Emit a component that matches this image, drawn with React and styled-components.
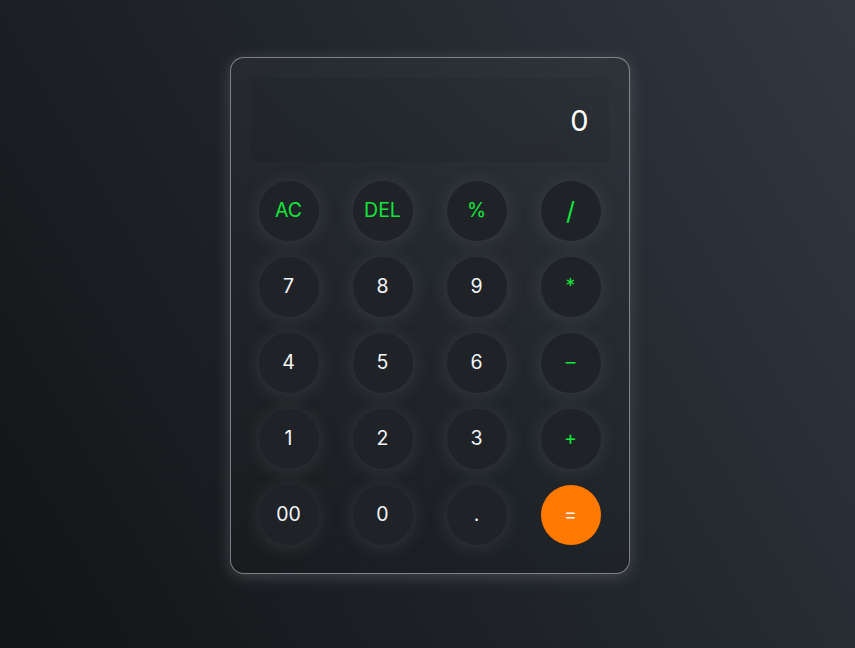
import React from "react";
import styled, { createGlobalStyle } from "styled-components";

const Global = createGlobalStyle`
  html, body { margin: 0; padding: 0; height: 100%; }
  body {
    font-family: "Inter", "Noto Sans", sans-serif;
    background: linear-gradient(60deg, #121416 0%, #22272d 55%, #313840 100%);
    min-height: 648px;
  }
  #root { min-height: 648px; }
`;

const Page = styled.div`
  display: flex;
  justify-content: center;
  padding-top: 57px;
  padding-left: 4px;
  min-height: 648px;
  box-sizing: border-box;
`;

const Calculator = styled.div`
  width: 400px;
  height: 517px;
  box-sizing: border-box;
  padding: 20px;
  border: 1px solid rgba(200, 204, 210, 0.55);
  border-radius: 14px;
  background: linear-gradient(160deg, rgba(255,255,255,0.03), rgba(0,0,0,0.08));
  box-shadow: 0 3px 15px rgba(113, 115, 119, 0.45);
  display: flex;
  flex-direction: column;
`;

const Display = styled.div`
  height: 85px;
  background: rgba(0, 0, 0, 0.06);
  display: flex;
  align-items: center;
  justify-content: flex-end;
  padding-right: 20px;
  color: #ffffff;
  font-size: 29px;
  font-weight: 400;
  margin-bottom: 11px;
`;

const Keys = styled.div`
  display: grid;
  grid-template-columns: repeat(4, 60px);
  grid-auto-rows: 60px;
  column-gap: 34px;
  row-gap: 16px;
  padding: 8px;
`;

const Key = styled.button`
  width: 60px;
  height: 60px;
  border-radius: 50%;
  border: none;
  padding: 0;
  margin: 0;
  cursor: pointer;
  font-family: inherit;
  font-size: ${(p) => (p.$big ? "25px" : "19.5px")};
  font-weight: 400;
  color: ${(p) => (p.$op ? "#13e63a" : "#f4f5f7")};
  background: ${(p) => (p.$eq ? "#ff7800" : "#1f2328")};
  box-shadow: ${(p) => (p.$eq ? "none" : "0 2px 18px rgba(120, 124, 130, 0.26)")};
  display: flex;
  align-items: center;
  justify-content: center;
  line-height: 1;
`;

const keys = [
  { l: "AC", op: true },
  { l: "DEL", op: true },
  { l: "%", op: true },
  { l: "/", op: true, big: true },
  { l: "7" }, { l: "8" }, { l: "9" }, { l: "*", op: true },
  { l: "4" }, { l: "5" }, { l: "6" }, { l: "–", op: true },
  { l: "1" }, { l: "2" }, { l: "3" }, { l: "+", op: true },
  { l: "00" }, { l: "0" }, { l: "." }, { l: "=", eq: true },
];

export default function App() {
  return (
    <>
      <Global />
      <Page>
        <Calculator>
          <Display>0</Display>
          <Keys>
            {keys.map((k) => (
              <Key key={k.l} $op={k.op} $eq={k.eq} $big={k.big}>
                {k.l}
              </Key>
            ))}
          </Keys>
        </Calculator>
      </Page>
    </>
  );
}
